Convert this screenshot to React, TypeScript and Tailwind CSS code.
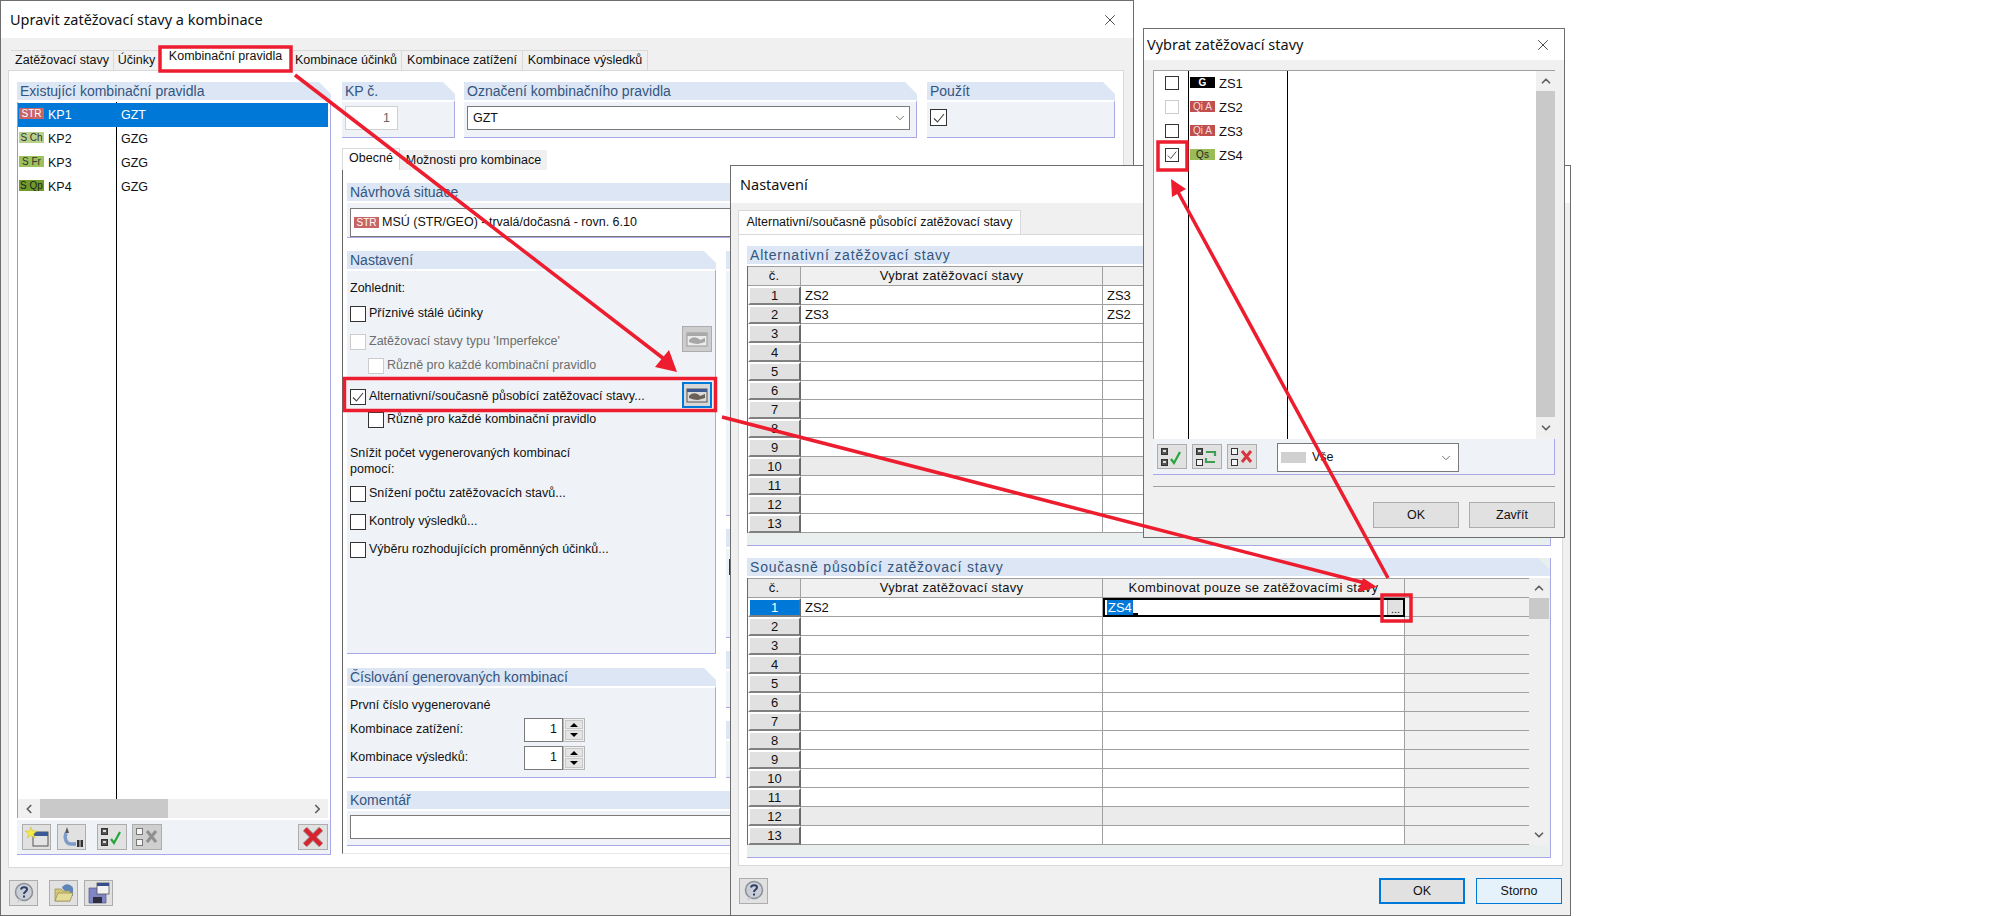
import type { ReactNode } from 'react';
import { ChevronDown, ChevronLeft, ChevronRight, ChevronUp, X } from 'lucide-react';

const rows = [1, 2, 3, 4, 5, 6, 7, 8, 9, 10, 11, 12, 13];

const Tag = ({ label, className }: { label: string; className: string }) => (
  <span className={`inline-flex h-[11px] w-[25px] shrink-0 items-center justify-center text-[10px] leading-none ${className}`}>
    {label}
  </span>
);

const Panel = ({ title, className, children }: { title: string; className: string; children?: ReactNode }) => (
  <div className={`flex flex-col ${className}`}>
    <div className="flex h-[18px] shrink-0 items-center bg-[#dce6f4] pl-[3px] text-[14px] text-[#34557f] [clip-path:polygon(0_0,calc(100%-12px)_0,100%_12px,100%_100%,0_100%)]">
      <span className="whitespace-nowrap">{title}</span>
    </div>
    <div className="flex min-h-0 flex-1 flex-col border-t-2 border-r border-b border-t-white border-r-[#a9a9e8] border-b-[#a9a9e8] bg-[#eff3f8]">
      {children}
    </div>
  </div>
);

const Check = ({ checked, disabled, className }: { checked?: boolean; disabled?: boolean; className?: string }) => (
  <span className={`flex h-[16px] w-[16px] shrink-0 items-center justify-center border bg-white ${disabled ? 'border-[#cccccc]' : 'border-[#333333]'} ${className ?? ''}`}>
    {checked && (
      <svg viewBox="0 0 14 14" className="h-[14px] w-[14px]">
        <path d="M2 7.5 L5.5 11 L12 3" fill="none" stroke="#444" strokeWidth="1.1" />
      </svg>
    )}
  </span>
);

const CheckRow = ({ label, checked, disabled, className }: { label: string; checked?: boolean; disabled?: boolean; className: string }) => (
  <div className={`flex h-[16px] items-center gap-[3px] ${className}`}>
    <Check checked={checked} disabled={disabled} />
    <span className={`whitespace-nowrap ${disabled ? 'text-[#6d6d6d]' : ''}`}>{label}</span>
  </div>
);

const IconBtn = ({ children, className }: { children: ReactNode; className: string }) => (
  <div className={`flex shrink-0 items-center justify-center border border-[#adadad] ${className}`}>{children}</div>
);

const NewIcon = () => (
  <svg viewBox="0 0 24 20" className="h-[20px] w-[24px]">
    <rect x="8" y="5" width="15" height="14" fill="#e4e4e4" stroke="#555" />
    <rect x="8" y="5" width="15" height="4" fill="#3c5a96" />
    <path d="M6 0 L7.5 4 L12 4 L8.5 7 L10 11 L6 8.5 L2 11 L3.5 7 L0 4 L4.5 4 Z" fill="#f5e94a" stroke="#c7b93a" strokeWidth=".5" />
  </svg>
);

const ChainIcon = () => (
  <svg viewBox="0 0 24 22" className="h-[22px] w-[24px]">
    <path d="M7 1 L5 7 L9 7 Z" fill="#555" />
    <path d="M6 7 C4 12 6 18 11 18 L16 18" fill="none" stroke="#7d9ccc" strokeWidth="3.5" />
    <rect x="17" y="14" width="2.5" height="7" fill="#333" />
    <rect x="20.5" y="14" width="2.5" height="7" fill="#333" />
  </svg>
);

const Boxes = ({ top, bottom, muted }: { top: boolean; bottom: boolean; muted?: boolean }) => {
  const stroke = muted ? '#777' : '#333';
  return (
    <>
      <rect x="1.5" y="1.5" width="6" height="6" fill={top ? '#555' : '#f4f4f4'} stroke={stroke} />
      <rect x="1.5" y="12.5" width="6" height="6" fill={bottom ? '#555' : '#f4f4f4'} stroke={stroke} />
      {top && <rect x="3" y="3" width="3" height="2" fill="#ddd" />}
      {bottom && <rect x="3" y="14" width="3" height="2" fill="#ddd" />}
    </>
  );
};

const CheckAllIcon = () => (
  <svg viewBox="0 0 24 20" className="h-[20px] w-[24px]">
    <Boxes top bottom />
    <path d="M11 12 L14 16 L20 5" fill="none" stroke="#25a53a" strokeWidth="2.2" />
  </svg>
);

const SwapIcon = () => (
  <svg viewBox="0 0 24 20" className="h-[20px] w-[24px]">
    <Boxes top bottom={false} />
    <path d="M11 5 H20 V9 M20 15 H11 V11" fill="none" stroke="#3f9e55" strokeWidth="2.2" />
  </svg>
);

const ClearIcon = ({ muted }: { muted?: boolean }) => (
  <svg viewBox="0 0 24 20" className="h-[20px] w-[24px]">
    <Boxes top={false} bottom={false} muted={muted} />
    <path d="M12 4 L21 15 M21 4 L12 15" fill="none" stroke={muted ? '#8f8f8f' : '#d8343f'} strokeWidth="3" />
  </svg>
);

const RedXIcon = () => (
  <svg viewBox="0 0 22 22" className="h-[22px] w-[22px]">
    <path d="M3 3 L19 19 M19 3 L3 19" fill="none" stroke="#9a8a8a" strokeWidth="6" />
    <path d="M3 3 L19 19 M19 3 L3 19" fill="none" stroke="#d8232f" strokeWidth="4" />
  </svg>
);

const HelpIcon = () => (
  <svg viewBox="0 0 22 22" className="h-[22px] w-[22px]">
    <circle cx="11" cy="10" r="8.5" fill="#c9ced6" stroke="#8b8f96" strokeWidth="1.5" />
    <path d="M5 17 L4 21 L9 18 Z" fill="#c9ced6" />
    <path d="M8 7.5 C8.5 4.5 14 4.5 14 7.5 C14 9.5 11 9.5 11 12" fill="none" stroke="#2f3e66" strokeWidth="2" />
    <rect x="10" y="13.5" width="2" height="2" fill="#2f3e66" />
  </svg>
);

const FolderIcon = () => (
  <svg viewBox="0 0 22 22" className="h-[22px] w-[22px]">
    <path d="M9 6 C11 1 17 1 20 6 L20 14 L17 14 Z" fill="#5f84b8" />
    <path d="M2 7 H8 L10 9 H17 V19 H2 Z" fill="#d5c778" stroke="#9c9358" strokeWidth=".8" />
    <path d="M2 19 L5 11 H20 L17 19 Z" fill="#e6dc9a" stroke="#9c9358" strokeWidth=".8" />
  </svg>
);

const SaveIcon = () => (
  <svg viewBox="0 0 22 22" className="h-[22px] w-[22px]">
    <path d="M1 6 H16 L18 8 V21 H1 Z" fill="#8085c4" stroke="#555a8e" strokeWidth=".7" />
    <rect x="5" y="15" width="9" height="6" fill="#2e2e3c" />
    <rect x="9" y="1" width="12" height="11" fill="#f2f2f2" stroke="#555" strokeWidth=".8" />
    <rect x="9" y="1" width="12" height="3" fill="#33508c" />
  </svg>
);

const EditIcon = () => (
  <svg viewBox="0 0 22 16" className="h-[16px] w-[22px]">
    <rect x="1" y="2" width="20" height="13" fill="#dcdcdc" stroke="#555" />
    <rect x="1" y="2" width="20" height="3" fill="#3d5b92" />
    <path d="M3 9 C7 5 11 6 14 9 L19 7 V11 L12 13 C9 13 6 12 3 11 Z" fill="#6b6156" />
  </svg>
);

const EditIconOff = () => (
  <svg viewBox="0 0 22 16" className="h-[16px] w-[22px]">
    <rect x="1" y="2" width="20" height="13" fill="#ececec" stroke="#9a9a9a" />
    <rect x="1" y="2" width="20" height="3" fill="#a9a9a9" />
    <path d="M3 9 C7 5 11 6 14 9 L19 7 V11 L12 13 C9 13 6 12 3 11 Z" fill="#a6a6a6" />
  </svg>
);

const Spin = () => (
  <div className="flex h-[24px] w-[61px]">
    <div className="flex w-[39px] items-center justify-end border border-[#7a7a7a] bg-white pr-[5px]">1</div>
    <div className="flex w-[22px] flex-col gap-[1px] border border-[#b5b5b5] bg-[#f0f0f0] p-[1px]">
      <div className="flex flex-1 items-center justify-center border border-[#c8c8c8] bg-[#e4e4e4]">
        <span className="h-0 w-0 border-x-[4px] border-b-[4px] border-x-transparent border-b-black" />
      </div>
      <div className="flex flex-1 items-center justify-center border border-[#c8c8c8] bg-[#e4e4e4]">
        <span className="h-0 w-0 border-x-[4px] border-t-[4px] border-x-transparent border-t-black" />
      </div>
    </div>
  </div>
);

const MainWindow = () => (
  <div className="absolute top-0 left-0 flex h-[916px] w-[1134px] flex-col border border-[#6e6e6e] bg-[#f0f0f0]">
    <div className="flex h-[37px] shrink-0 items-center justify-between bg-white pr-[14px] pl-[9px] font-['Noto_Sans',sans-serif] text-[14.5px] text-[#111]">
      <span>Upravit zatěžovací stavy a kombinace</span>
      <X className="h-[18px] w-[18px] stroke-1" />
    </div>
    <div className="flex h-[32px] shrink-0 items-end pl-[10px]">
      {[
        ['Zatěžovací stavy', 'w-[103px]'],
        ['Účinky', 'w-[46px]'],
      ].map(([t, w]) => (
        <div key={t} className={`flex h-[20px] items-center justify-center border-t border-r border-[#d9d9d9] ${w}`}>{t}</div>
      ))}
      <div className="flex h-[24px] w-[131px] items-center justify-center bg-white pb-[3px]">Kombinační pravidla</div>
      {[
        ['Kombinace účinků', 'w-[111px]'],
        ['Kombinace zatížení', 'w-[121px]'],
        ['Kombinace výsledků', 'w-[125px]'],
      ].map(([t, w]) => (
        <div key={t} className={`flex h-[20px] items-center justify-center border-t border-r border-[#d9d9d9] ${w}`}>{t}</div>
      ))}
    </div>
    <div className="mx-[7px] flex h-[798px] w-[1116px] shrink-0 gap-[11px] border border-[#d9d9d9] bg-white pt-[11px] pl-[8px]">
      <Panel title="Existující kombinační pravidla" className="h-[773px] w-[314px]">
        <div className="flex min-h-0 flex-1 flex-col border-l border-[#a0a0a0] bg-white">
          <div className="relative flex-1 pt-[1px]">
            <div className="absolute top-0 bottom-0 left-[98px] w-[1px] bg-black" />
            {[
              ['STR', 'KP1', 'GZT', 'bg-[#c86464] text-white'],
              ['S Ch', 'KP2', 'GZG', 'bg-[#b9d08b] text-[#333]'],
              ['S Fr', 'KP3', 'GZG', 'bg-[#9cc15a] text-[#333]'],
              ['S Qp', 'KP4', 'GZG', 'bg-[#6f9b2b] text-[#222]'],
            ].map(([tag, kp, typ, cl], i) => (
              <div key={kp} className={`relative flex h-[24px] items-center ${i === 0 ? 'mr-[2px] bg-[#0078d7] text-white' : ''}`}>
                <span className="flex w-[30px] pb-[3px] pl-[1px]">
                  <Tag label={tag} className={cl} />
                </span>
                <span className="w-[73px]">{kp}</span>
                <span>{typ}</span>
              </div>
            ))}
          </div>
          <div className="mr-[2px] flex h-[19px] shrink-0 items-center bg-[#f0f0f0]">
            <ChevronLeft className="h-[14px] w-[22px] text-[#606060]" strokeWidth={3} />
            <div className="h-full w-[128px] bg-[#c9c9c9]" />
            <div className="flex-1" />
            <ChevronRight className="h-[14px] w-[21px] text-[#606060]" strokeWidth={3} />
          </div>
        </div>
        <div className="flex h-[36px] shrink-0 items-center border-t-2 border-t-white pl-[5px]">
          <IconBtn className="h-[26px] w-[29px] bg-[#e1e1e1]"><NewIcon /></IconBtn>
          <IconBtn className="ml-[6px] h-[26px] w-[29px] bg-[#e1e1e1]"><ChainIcon /></IconBtn>
          <IconBtn className="ml-[11px] h-[26px] w-[30px] bg-[#e1e1e1]"><CheckAllIcon /></IconBtn>
          <IconBtn className="ml-[5px] h-[26px] w-[30px] bg-[#cfcfcf]"><ClearIcon muted /></IconBtn>
          <IconBtn className="ml-[136px] h-[26px] w-[30px] bg-[#e1e1e1]"><RedXIcon /></IconBtn>
        </div>
      </Panel>

      <div className="flex w-[781px] flex-col">
        <div className="flex h-[56px] shrink-0 gap-[9px]">
          <Panel title="KP č." className="w-[113px]">
            <div className="mt-[4px] ml-[3px] flex h-[24px] w-[53px] items-center justify-end border border-[#d0d0d0] bg-white pr-[7px] text-[#666]">1</div>
          </Panel>
          <Panel title="Označení kombinačního pravidla" className="w-[453px]">
            <div className="mt-[4px] ml-[3px] flex h-[24px] w-[443px] items-center justify-between border border-[#7a7a7a] bg-white pr-[2px] pl-[5px]">
              GZT
              <ChevronDown className="h-[14px] w-[14px] stroke-1" />
            </div>
          </Panel>
          <Panel title="Použít" className="ml-[1px] w-[188px]">
            <Check checked className="mt-[7px] ml-[3px] !h-[17px] !w-[17px]" />
          </Panel>
        </div>

        <div className="mt-[10px] flex h-[22px] shrink-0 items-end">
          <div className="flex h-[22px] w-[58px] items-center justify-center border-t border-r border-l border-[#d9d9d9] bg-white pb-[3px]">Obecné</div>
          <div className="flex h-[20px] w-[147px] items-center justify-center bg-[#f0f0f0]">Možnosti pro kombinace</div>
        </div>
        <div className="flex h-[684px] shrink-0 flex-col border-b border-l border-b-[#e8e8e8] border-l-[#666] pt-[13px] pl-[4px]">
          <Panel title="Návrhová situace" className="h-[55px] w-[765px] shrink-0">
            <div className="mt-[5px] ml-[3px] flex h-[29px] w-[755px] items-center border border-[#7a7a7a] bg-white pl-[3px]">
              <Tag label="STR" className="mr-[3px] bg-[#c86464] text-white" />
              MSÚ (STR/GEO) - trvalá/dočasná - rovn. 6.10
            </div>
          </Panel>
          <div className="mt-[13px] flex h-[527px] shrink-0 gap-[10px]">
            <div className="flex w-[369px] shrink-0 flex-col">
              <Panel title="Nastavení" className="h-[403px] shrink-0">
                <div className="relative flex-1 pl-[3px]">
                  <div className="pt-[8px]">Zohlednit:</div>
                  <CheckRow label="Příznivé stálé účinky" className="mt-[8px]" />
                  <CheckRow label="Zatěžovací stavy typu 'Imperfekce'" disabled className="mt-[12px]" />
                  <CheckRow label="Různě pro každé kombinační pravidlo" disabled className="mt-[8px] ml-[18px]" />
                  <CheckRow label="Alternativní/současně působící zatěžovací stavy..." checked className="mt-[15px]" />
                  <CheckRow label="Různě pro každé kombinační pravidlo" className="mt-[7px] ml-[18px]" />
                  <div className="mt-[17px] w-[260px] leading-[16px]">Snížit počet vygenerovaných kombinací pomocí:</div>
                  <CheckRow label="Snížení počtu zatěžovacích stavů..." className="mt-[9px]" />
                  <CheckRow label="Kontroly výsledků..." className="mt-[12px]" />
                  <CheckRow label="Výběru rozhodujících proměnných účinků..." className="mt-[12px]" />
                  <IconBtn className="absolute top-[55px] left-[335px] h-[26px] w-[30px] bg-[#cdcdcd]"><EditIconOff /></IconBtn>
                  <IconBtn className="absolute top-[111px] left-[335px] h-[26px] w-[30px] !border-2 !border-[#0078d7] bg-[#d8d8d8]"><EditIcon /></IconBtn>
                </div>
              </Panel>
              <Panel title="Číslování generovaných kombinací" className="mt-[14px] h-[110px] shrink-0">
                <div className="flex flex-col pl-[3px]">
                  <div className="mt-[8px]">První číslo vygenerované</div>
                  <div className="mt-[3px] flex items-center justify-between pr-[130px]">Kombinace zatížení:<Spin /></div>
                  <div className="mt-[4px] flex items-center justify-between pr-[130px]">Kombinace výsledků:<Spin /></div>
                </div>
              </Panel>
            </div>
            <div className="flex w-[386px] flex-col gap-[13px]">
              <Panel title="" className="h-[265px] shrink-0" />
              <Panel title="" className="h-[109px] shrink-0">
                <div className="mt-[10px] ml-[3px] h-[16px] w-[16px] border border-[#333] bg-white" />
              </Panel>
              <Panel title="" className="h-[57px] shrink-0" />
              <Panel title="" className="h-[57px] shrink-0" />
            </div>
          </div>
          <Panel title="Komentář" className="mt-[13px] h-[55px] w-[765px] shrink-0">
            <div className="mt-[4px] ml-[3px] h-[24px] w-[755px] border border-[#7a7a7a] bg-white" />
          </Panel>
        </div>
      </div>
    </div>
    <div className="flex flex-1 items-start gap-[11px] pt-[12px] pl-[8px]">
      <IconBtn className="h-[26px] w-[29px] bg-[#e1e1e1]"><HelpIcon /></IconBtn>
      <div className="flex gap-[6px]">
        <IconBtn className="h-[26px] w-[29px] bg-[#e1e1e1]"><FolderIcon /></IconBtn>
        <IconBtn className="h-[26px] w-[29px] bg-[#e1e1e1]"><SaveIcon /></IconBtn>
      </div>
    </div>
  </div>
);

const GridTable = ({ thirdHeader, values, grayRow, active }: { thirdHeader: string; values: string[][]; grayRow: number; active?: boolean }) => (
  <div className="flex w-[803px] font-['Liberation_Sans',sans-serif] text-[13px]">
    <div className="w-[782px] shrink-0 border-l border-[#696969]">
      <div className="flex h-[20px] border-t border-[#a0a0a0] bg-[#f0f0f0] text-center leading-[18px] tracking-[0.3px]">
        <div className="w-[53px] shrink-0 border-r border-b border-[#a0a0a0] bg-[#e8e8e8]">č.</div>
        <div className="w-[302px] shrink-0 border-r border-b border-[#a0a0a0]">Vybrat zatěžovací stavy</div>
        <div className="w-[302px] shrink-0 border-r border-b border-[#a0a0a0]">{thirdHeader}</div>
        <div className="flex-1 border-b border-[#a0a0a0]" />
      </div>
      {rows.map((n, i) => {
        const isActive = active && i === 0;
        return (
          <div key={n} className={`flex h-[19px] leading-[20px] ${n === grayRow ? 'bg-[#ebebeb]' : 'bg-white'}`}>
            <div className={`w-[53px] shrink-0 border-2 border-t-white border-r-[#696969] border-b-[#808080] border-l-white text-center leading-[16px] ${isActive ? 'bg-[#0078d7] text-white' : 'bg-[#e1e1e1]'}`}>{n}</div>
            <div className="w-[302px] shrink-0 border-r border-b border-[#a0a0a0] pl-[4px]">{values[i]?.[0]}</div>
            {isActive ? (
              <div className="flex w-[302px] shrink-0 items-stretch justify-between border-2 border-black bg-white pl-[2px]">
                <span className="flex items-end">
                  <span className="bg-[#0078d7] px-[1px] leading-[15px] text-white">ZS4</span>
                  <span className="h-[2px] w-[5px] bg-black" />
                </span>
                <span className="flex w-[16px] items-end justify-center border-l border-[#a0a0a0] bg-[#e1e1e1] pb-[2px] text-[11px] leading-[8px]">...</span>
              </div>
            ) : (
              <div className="w-[302px] shrink-0 border-r border-b border-[#a0a0a0] pl-[4px]">{values[i]?.[1]}</div>
            )}
            <div className="flex-1 border-b border-[#a0a0a0] bg-[#f0f0f0]" />
          </div>
        );
      })}
    </div>
    <div className="flex w-[20px] shrink-0 flex-col bg-[#f0f0f0]">
      <div className="flex h-[20px] items-center justify-center">
        <ChevronUp className="h-[14px] w-[14px] text-[#606060]" strokeWidth={3} />
      </div>
      <div className="h-[21px] bg-[#c9c9c9]" />
      <div className="flex-1" />
      <div className="flex h-[20px] items-center justify-center">
        <ChevronDown className="h-[14px] w-[14px] text-[#606060]" strokeWidth={3} />
      </div>
    </div>
  </div>
);

const SectionHead = ({ title }: { title: string }) => (
  <div className="flex h-[18px] items-center bg-[#dce6f4] pl-[3px] text-[14px] tracking-[0.8px] text-[#34557f] [clip-path:polygon(0_0,calc(100%-12px)_0,100%_12px,100%_100%,0_100%)]">
    {title}
  </div>
);

const SettingsWindow = () => (
  <div className="absolute top-[165px] left-[730px] flex h-[751px] w-[841px] flex-col border border-[#6e6e6e] bg-[#f0f0f0]">
    <div className="flex h-[37px] shrink-0 items-center bg-white pl-[9px] font-['Noto_Sans',sans-serif] text-[14.5px] text-[#111]">Nastavení</div>
    <div className="flex h-[31px] shrink-0 items-end pl-[7px]">
      <div className="flex h-[24px] w-[283px] items-center justify-center border-t border-r border-l border-[#d9d9d9] bg-white">
        Alternativní/současně působící zatěžovací stavy
      </div>
    </div>
    <div className="mx-[7px] flex h-[632px] shrink-0 flex-col gap-[12px] border border-[#d9d9d9] bg-white pt-[11px] pl-[8px]">
      <div className="w-[804px] border-r border-b border-[#a9a9e8] bg-[#e9eeee] pb-[12px]">
        <SectionHead title="Alternativní zatěžovací stavy" />
        <div className="h-[2px] bg-white" />
        <GridTable thirdHeader="" values={[['ZS2', 'ZS3'], ['ZS3', 'ZS2']]} grayRow={10} />
      </div>
      <div className="w-[804px] border-r border-b border-[#a9a9e8] bg-[#e9eeee] pb-[12px]">
        <SectionHead title="Současně působící zatěžovací stavy" />
        <div className="h-[2px] bg-white" />
        <GridTable thirdHeader="Kombinovat pouze se zatěžovacími stavy" values={[['ZS2', '']]} grayRow={12} active />
      </div>
    </div>
    <div className="flex flex-1 items-start justify-between px-[8px] pt-[12px]">
      <IconBtn className="h-[26px] w-[29px] bg-[#e1e1e1]"><HelpIcon /></IconBtn>
      <div className="flex gap-[11px]">
        <div className="flex h-[26px] w-[86px] items-center justify-center border-2 border-[#0078d7] bg-[#e1e1e1]">OK</div>
        <div className="flex h-[26px] w-[86px] items-center justify-center border border-[#0078d7] bg-[#e5f1fb]">Storno</div>
      </div>
    </div>
  </div>
);

const picks = [
  { label: 'G', name: 'ZS1', tag: 'bg-black font-bold text-white', disabled: false, checked: false },
  { label: 'Qi A', name: 'ZS2', tag: 'bg-[#c0504d] text-[#f5dede]', disabled: true, checked: false },
  { label: 'Qi A', name: 'ZS3', tag: 'bg-[#c0504d] text-[#f5dede]', disabled: false, checked: false },
  { label: 'Qs', name: 'ZS4', tag: 'bg-[#9bbb59] text-[#222]', disabled: false, checked: true },
];

const PickWindow = () => (
  <div className="absolute top-[28px] left-[1143px] flex h-[510px] w-[422px] flex-col border border-[#6e6e6e] bg-[#f0f0f0]">
    <div className="flex h-[31px] shrink-0 items-center justify-between bg-white pr-[12px] pl-[3px] font-['Noto_Sans',sans-serif] text-[14.5px] text-[#111]">
      Vybrat zatěžovací stavy
      <X className="h-[18px] w-[18px] stroke-1" />
    </div>
    <div className="mx-[9px] mt-[10px] flex w-[402px] flex-col border-t border-[#a0a0a0]">
      <div className="flex h-[368px] border-l border-[#a0a0a0] bg-white">
        <div className="flex w-[35px] shrink-0 flex-col gap-[10px] border-r border-black pt-[5px] pl-[11px]">
          {picks.map((p) => (
            <Check key={p.name} checked={p.checked} disabled={p.disabled} className="!h-[14px] !w-[14px]" />
          ))}
        </div>
        <div className="flex w-[99px] shrink-0 flex-col border-r border-black pt-[5px] pl-[1px] font-['Liberation_Sans',sans-serif] text-[13px]">
          {picks.map((p) => (
            <div key={p.name} className="flex h-[24px] gap-[4px] leading-[16px]">
              <Tag label={p.label} className={`mt-[1px] ${p.tag}`} />
              {p.name}
            </div>
          ))}
        </div>
        <div className="flex-1" />
        <div className="flex w-[19px] shrink-0 flex-col bg-[#f0f0f0]">
          <div className="flex h-[20px] items-center justify-center">
            <ChevronUp className="h-[14px] w-[14px] text-[#606060]" strokeWidth={3} />
          </div>
          <div className="flex-1 bg-[#c9c9c9]" />
          <div className="flex h-[22px] items-center justify-center">
            <ChevronDown className="h-[14px] w-[14px] text-[#606060]" strokeWidth={3} />
          </div>
        </div>
      </div>
      <div className="flex h-[36px] items-center border-r border-b border-[#a9a9e8] bg-[#eff3f8] pl-[4px]">
        <IconBtn className="h-[25px] w-[30px] bg-[#e1e1e1]"><CheckAllIcon /></IconBtn>
        <IconBtn className="ml-[5px] h-[25px] w-[30px] bg-[#e1e1e1]"><SwapIcon /></IconBtn>
        <IconBtn className="ml-[5px] h-[25px] w-[30px] bg-[#e1e1e1]"><ClearIcon /></IconBtn>
        <div className="mt-[2px] ml-[20px] flex h-[29px] w-[182px] items-center border border-[#7a7a7a] bg-white pr-[5px] pl-[3px]">
          <span className="h-[11px] w-[25px] bg-[#d0d0d0]" />
          <span className="ml-[6px] flex-1">Vše</span>
          <ChevronDown className="h-[14px] w-[14px] stroke-1" />
        </div>
      </div>
    </div>
    <div className="mx-[9px] mt-[11px] h-[1px] w-[402px] bg-[#a0a0a0]" />
    <div className="mt-[15px] flex justify-end gap-[10px] pr-[9px]">
      <div className="flex h-[26px] w-[86px] items-center justify-center border border-[#adadad] bg-[#e1e1e1]">OK</div>
      <div className="flex h-[26px] w-[86px] items-center justify-center border border-[#adadad] bg-[#e1e1e1]">Zavřít</div>
    </div>
  </div>
);

// Red annotations that the author drew over the dialogs
const Annotations = () => (
  <svg className="pointer-events-none absolute top-0 left-0 h-[916px] w-[2000px]" viewBox="0 0 2000 916">
    <g fill="none" stroke="#ed1c2e" strokeWidth="3.5">
      <line x1="295" y1="75" x2="668" y2="362" />
      <line x1="722" y1="417" x2="1365" y2="583" />
      <line x1="1388" y1="578" x2="1178" y2="192" />
      <rect x="160" y="47" width="131" height="24" />
      <rect x="344.5" y="378.5" width="371" height="32" />
      <rect x="1158" y="142" width="29" height="28" />
      <rect x="1382" y="595" width="29" height="26" />
    </g>
    <g fill="#ed1c2e">
      <polygon points="677,372 655,367 669,350" />
      <polygon points="1377,587 1363,578 1358,592" />
      <polygon points="1171,179 1172,197 1186,189" />
    </g>
  </svg>
);

export default function App() {
  return (
    <div className="relative h-[916px] w-[2000px] overflow-hidden bg-white font-['Liberation_Sans',sans-serif] text-[12.5px] text-[#111]">
      <MainWindow />
      <SettingsWindow />
      <PickWindow />
      <Annotations />
    </div>
  );
}
